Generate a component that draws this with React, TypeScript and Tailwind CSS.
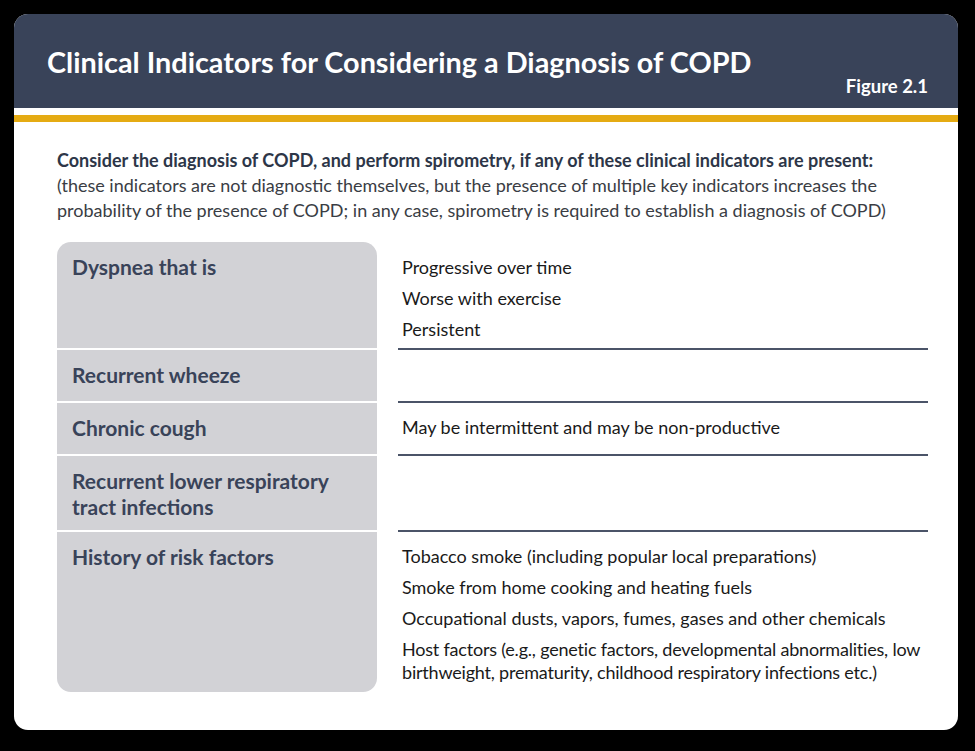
import React from "react";

const rows: { label: string[]; items: React.ReactNode[]; h: string; last?: boolean }[] = [
  { label: ["Dyspnea that is"], items: ["Progressive over time", "Worse with exercise", "Persistent"], h: "h-[108px]" },
  { label: ["Recurrent wheeze"], items: [], h: "h-[53px]" },
  { label: ["Chronic cough"], items: ["May be intermittent and may be non-productive"], h: "h-[53px]" },
  { label: ["Recurrent lower respiratory", "tract infections"], items: [], h: "h-[76px]" },
  {
    label: ["History of risk factors"],
    items: [
      "Tobacco smoke (including popular local preparations)",
      "Smoke from home cooking and heating fuels",
      "Occupational dusts, vapors, fumes, gases and other chemicals",
      <span className="tracking-[-0.2px]">
        Host factors (e.g., genetic factors, developmental abnormalities, low
        <br />
        birthweight, prematurity, childhood respiratory infections etc.)
      </span>,
    ],
    h: "h-[160px]",
    last: true,
  },
];

export default function App() {
  return (
    <div className="w-[975px] h-[751px] bg-black p-[14px] pr-[17px] pb-[21px] font-['Lato',sans-serif]">
      <div className="w-full h-full bg-white rounded-[14px] overflow-hidden flex flex-col">
        <div className="bg-[#394359] h-[94px] pl-[33px] pr-[30px] flex flex-col">
          <h1 className="text-white font-bold text-[28.8px] leading-none pt-[34px] whitespace-nowrap">
            Clinical Indicators for Considering a Diagnosis of COPD
          </h1>
          <div className="text-white font-bold text-[18.5px] leading-none self-end mt-0">Figure 2.1</div>
        </div>
        <div className="h-[7px]" />
        <div className="h-[7px] bg-[#e5ab13]" />
        <div className="pl-[43px] pr-[30px] pt-[26px] flex flex-col">
          <div className="text-[18px] leading-[25px] text-[#3a3d44] whitespace-nowrap">
            <div className="font-bold text-[#2d3648]">
              Consider the diagnosis of COPD, and perform spirometry, if any of these clinical indicators are present:
            </div>
            <div>
              (these indicators are not diagnostic themselves, but the presence of multiple key indicators increases the
              <br />
              probability of the presence of COPD; in any case, spirometry is required to establish a diagnosis of COPD)
            </div>
          </div>
          <div className="mt-[19px] flex flex-col">
            {rows.map((r, i) => (
              <div key={i} className={`flex gap-[21px] ${r.h}`}>
                <div
                  className={`w-[320px] shrink-0 bg-[#d2d2d6] pl-[15px] pt-[12px] ${
                    r.last ? "rounded-b-[14px]" : "border-b-2 border-white"
                  } ${i === 0 ? "rounded-t-[14px]" : ""}`}
                >
                  {r.label.map((l, j) => (
                    <div key={j} className="font-bold text-[21px] leading-[26px] text-[#394359] whitespace-nowrap">
                      {l}
                    </div>
                  ))}
                </div>
                <div
                  className={`flex-1 pl-[4px] flex flex-col gap-[8px] ${i === 0 ? "pt-[14px]" : "pt-[13px]"} ${
                    r.last ? "" : "border-b-2 border-[#4b5468]"
                  }`}
                >
                  {r.items.map((t, j) => (
                    <div key={j} className="text-[18px] leading-[23px] text-[#1a1a1a] whitespace-nowrap">
                      {t}
                    </div>
                  ))}
                </div>
              </div>
            ))}
          </div>
        </div>
      </div>
    </div>
  );
}
